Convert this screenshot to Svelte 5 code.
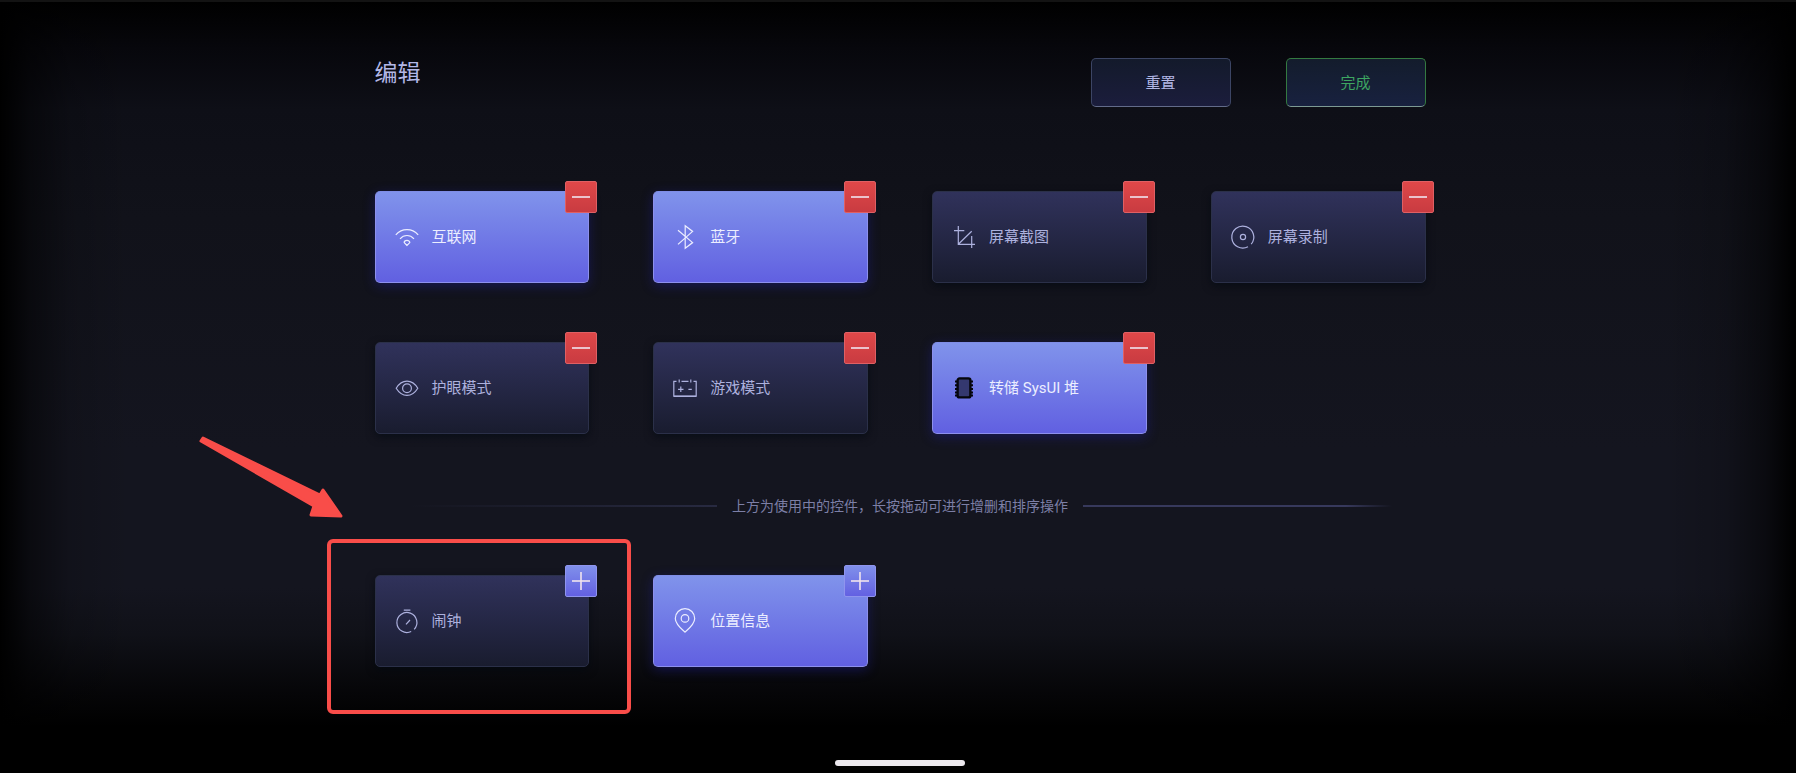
<script>
  let active = [
    { id: 'wifi', label: '互联网', on: true },
    { id: 'bluetooth', label: '蓝牙', on: true },
    { id: 'crop', label: '屏幕截图', on: false },
    { id: 'record', label: '屏幕录制', on: false },
    { id: 'eye', label: '护眼模式', on: false },
    { id: 'game', label: '游戏模式', on: false },
    { id: 'chip', label: '转储 SysUI 堆', on: true },
  ];
  let available = [
    { id: 'timer', label: '闹钟', on: false, marked: true },
    { id: 'pin', label: '位置信息', on: true },
  ];

  const initial = { active, available };

  const remove = (tile) => {
    active = active.filter((t) => t !== tile);
    available = [...available, tile];
  };
  const add = (tile) => {
    available = available.filter((t) => t !== tile);
    active = [...active, tile];
  };
  const reset = () => {
    active = initial.active;
    available = initial.available;
  };

  $: groups = [
    { name: 'active', tiles: active, action: remove, sign: 'minus', verb: '移除' },
    { name: 'available', tiles: available, action: add, sign: 'plus', verb: '添加' },
  ];
</script>

<main class="page">
  <div class="content">
    <header class="header">
      <h1>编辑</h1>
      <div class="actions">
        <button class="action" on:click={reset}>重置</button>
        <button class="action done">完成</button>
      </div>
    </header>

    {#each groups as group (group.name)}
      {#if group.name === 'available'}
        <div class="divider">
          <span class="line left"></span>
          <p>上方为使用中的控件，长按拖动可进行增删和排序操作</p>
          <span class="line right"></span>
        </div>
      {/if}
      <ul class="grid">
        {#each group.tiles as tile (tile.id)}
          <li>
            <button class="tile" class:on={tile.on}>
              <svg class="icon" viewBox="0 0 24 24" aria-hidden="true">
                {#if tile.id === 'wifi'}
                  <path d="M.8 9.8C7 2.8 17 2.8 23.2 9.8" />
                  <path d="M5 13.8c4-4.4 10-4.4 14 0" />
                  <path d="M12 20.5 9.2 17.6c0-3 5.6-3 5.6 0z" />
                {:else if tile.id === 'bluetooth'}
                  <path d="M5 5.2 19.6 17.6 12.2 23.2V.8l7.4 5.6L5 19.4" />
                {:else if tile.id === 'crop'}
                  <path d="M6.3 1v18.3H23M2 5.7h10.3M19.7 11v12M6.3 19.3 19.7 6.3" />
                {:else if tile.id === 'record'}
                  <path d="M17 21.8A11 11 0 1 1 20.2 19.2" />
                  <circle cx="12" cy="12" r="2.6" />
                {:else if tile.id === 'eye'}
                  <path d="M1.2 12.3C7 2.8 17 2.8 22.8 12.3 17 21.8 7 21.8 1.2 12.3z" />
                  <circle cx="12" cy="12.3" r="4.4" />
                {:else if tile.id === 'game'}
                  <path d="M3.5 5.3H.8V20.2H23.2V5.3H20.5M8.5 5.3h7M6.2 3.6v3M17.8 3.6v3" />
                  <path d="M.8 20.4h22.4M7.8 10.6v5.4M5.1 13.3h5.4M15.4 13.3h3.4" />
                {:else if tile.id === 'chip'}
                  <path class="pins" d="M3 5.5h18M3 9.2h18M3 12.9h18M3 16.6h18M3 19.4h18" />
                  <rect class="chip" x="5.6" y="2.4" width="12.8" height="19" rx="2" />
                {:else if tile.id === 'timer'}
                  <path d="M8.8 1.2h6.6M16.2 22.5A10 10 0 1 1 19.2 20.3M11 15.4l4-4.4" />
                {:else if tile.id === 'pin'}
                  <path d="M11 22.2C5.8 17.6 2.3 13.6 2.3 9.4a9.7 9.7 0 0 1 19.4 0c0 4.2-3.5 8.2-8.7 12.8" />
                  <path d="M11 22.2 12 23.2 13 22.2" />
                  <circle cx="12" cy="9.4" r="3.8" />
                {/if}
              </svg>
              <span class="label">{tile.label}</span>
            </button>
            <button
              class="badge {group.sign}"
              aria-label="{group.verb} {tile.label}"
              on:click={() => group.action(tile)}
            >
              <svg viewBox="0 0 18 18" aria-hidden="true">
                <path d="M0 9h18" />
                {#if group.sign === 'plus'}<path d="M9 0v18" />{/if}
              </svg>
            </button>
            {#if tile.marked}
              <div class="marker">
                <svg class="arrow" viewBox="0 0 150 90" aria-hidden="true">
                  <path d="M8 8 125 65 128 60 146 86 116 85 119 76 6 11z" />
                </svg>
              </div>
            {/if}
          </li>
        {/each}
      </ul>
    {/each}
  </div>
  <div class="home-bar"></div>
</main>

<style>
:global(body) {
  margin: 0;
  background: #000;
}
.page {
  box-sizing: border-box;
  min-height: 100vh;
  display: flex;
  flex-direction: column;
  padding: 56px 24px 7px 28px;
  border-top: 2px solid #131313;
  background:
    linear-gradient(to right, #000, rgba(0, 0, 0, .5) 30px, rgba(0, 0, 0, .15) 70px, transparent 130px),
    linear-gradient(to left, #000, rgba(0, 0, 0, .5) 30px, rgba(0, 0, 0, .15) 70px, transparent 130px),
    linear-gradient(#000, #07070c 6%, #0e0f17 14%, #11121a 28%, #14151f 58%, #14151f 76%, #101118 82%, #050507 90%, #000 94%);
  font-family: Roboto, "Noto Sans CJK SC", sans-serif;
}
.content {
  width: 100%;
  max-width: 1051px;
  margin: 0 auto;
}
.header {
  display: flex;
  justify-content: space-between;
  align-items: flex-start;
  margin-bottom: 84px;
}
h1 {
  margin: 0;
  font-size: 23px;
  line-height: 32px;
  font-weight: 400;
  color: #b3b7e6;
}
.actions {
  display: flex;
  gap: 55px;
}
button {
  box-sizing: border-box;
  font-family: inherit;
  font-size: 15px;
  cursor: pointer;
}
.action {
  width: 140px;
  height: 49px;
  padding: 0 0 2px;
  border: 1px solid #3c4564;
  border-bottom-color: #626b89;
  border-radius: 5px;
  background: linear-gradient(#131a2b, #1b1d3c);
  color: #b3b7e6;
}
.done {
  border-color: #347a41;
  border-bottom-color: #7d9a93;
  background: linear-gradient(#131c2c, #18213f);
  color: #3da561;
}
.grid {
  display: grid;
  grid-template-columns: repeat(4, 1fr);
  gap: 59px 64px;
  margin: 0;
  padding: 0;
  list-style: none;
}
li {
  position: relative;
}
.tile {
  display: flex;
  align-items: center;
  gap: 13px;
  width: 100%;
  height: 92px;
  padding: 0 19px;
  border: 1px solid #2b3049;
  border-radius: 5px;
  background: linear-gradient(#30325b, #191c2f);
  box-shadow: 0 3px 8px rgba(2, 8, 16, .6);
  color: #adb1de;
}
.tile.on {
  border-color: #8d90ec;
  border-top-color: #7f8de6;
  background: linear-gradient(#8093eb, #6160e1);
  box-shadow: 0 3px 12px rgba(30, 32, 150, .45);
  color: #eceeff;
}
.label {
  padding-bottom: 3px;
}
.icon {
  flex: none;
  width: 24px;
  height: 24px;
  overflow: visible;
  fill: none;
  stroke: currentColor;
  stroke-width: 1.2;
}
.pins {
  stroke: #05060c;
  stroke-width: 2;
}
.chip {
  fill: #34386f;
  stroke: #05060c;
  stroke-width: 2.4;
}
.badge {
  position: absolute;
  top: -10px;
  right: -8px;
  display: flex;
  align-items: center;
  justify-content: center;
  width: 32px;
  height: 32px;
  padding: 0;
  border: 1px solid #df6064;
  border-radius: 2px;
  background: linear-gradient(#df4849, #c93b41);
}
.badge.plus {
  border-color: #8f94ee;
  background: linear-gradient(#8090ea, #6360e2);
}
.badge svg {
  width: 18px;
  height: 18px;
  fill: none;
  stroke: #f0e4ee;
  stroke-width: 1.6;
}
.divider {
  display: flex;
  align-items: center;
  gap: 15px;
  margin: 62px 0 59px;
  padding: 0 34px;
}
.divider p {
  margin: 0;
  font-size: 14px;
  line-height: 20px;
  color: #7c7fa6;
}
.line {
  flex: 1;
  height: 2px;
}
.left {
  background: linear-gradient(to right, transparent, #282a41);
}
.right {
  background: linear-gradient(to right, #37395c 85%, transparent);
}
.marker {
  position: absolute;
  top: -36px;
  right: -42px;
  bottom: -47px;
  left: -48px;
  border: 4px solid #f94d49;
  border-radius: 6px;
  pointer-events: none;
}
.arrow {
  position: absolute;
  top: -113px;
  left: -136px;
  width: 150px;
  height: 90px;
  fill: #f94d49;
  stroke: #f94d49;
  stroke-width: 3;
  stroke-linejoin: round;
}
.home-bar {
  width: 130px;
  height: 6px;
  margin: auto auto 0;
  border-radius: 3px;
  background: #ece9ee;
}
</style>
